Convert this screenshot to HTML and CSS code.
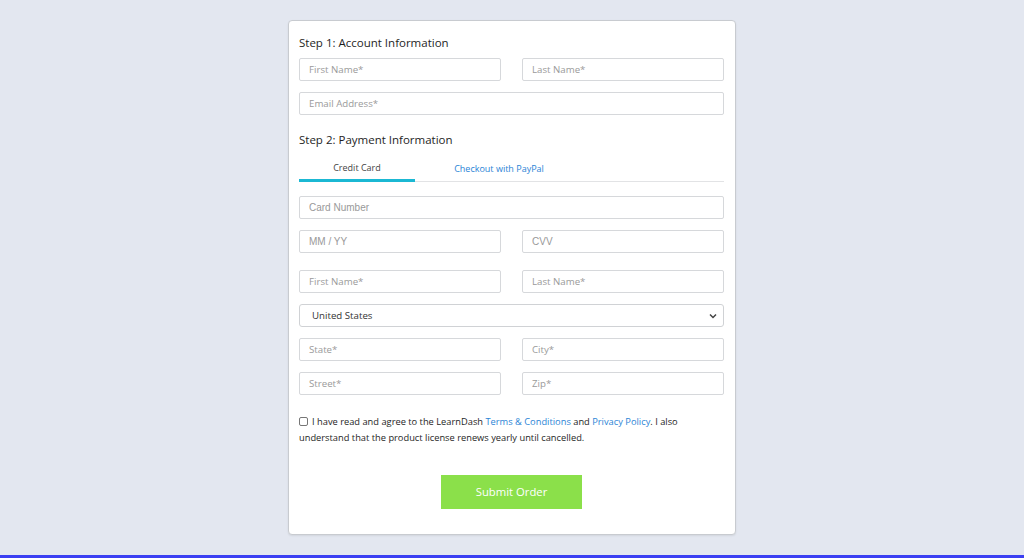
FILE: index.html
```html
<!DOCTYPE html>
<html>
<head>
<meta charset="utf-8">
<link rel="stylesheet" href="styles.css">
</head>
<body>
<div class="page">
  <form class="card">
    <h2 class="step step1">Step 1: Account Information</h2>
    <div class="row">
      <div class="field">First Name*</div>
      <div class="field">Last Name*</div>
    </div>
    <div class="row">
      <div class="field">Email Address*</div>
    </div>
    <h2 class="step step2">Step 2: Payment Information</h2>
    <div class="tabs">
      <div class="tab active">Credit Card</div>
      <div class="tab link">Checkout with PayPal</div>
    </div>
    <div class="row card-row">
      <div class="field stripe">Card Number</div>
    </div>
    <div class="row">
      <div class="field stripe">MM / YY</div>
      <div class="field stripe">CVV</div>
    </div>
    <div class="row billing">
      <div class="field">First Name*</div>
      <div class="field">Last Name*</div>
    </div>
    <div class="row">
      <div class="field select">
        <span>United States</span>
        <svg class="chev" width="8" height="6" viewBox="0 0 8 6"><path d="M1 1.5 L4 4.5 L7 1.5" fill="none" stroke="#444" stroke-width="1.5"/></svg>
      </div>
    </div>
    <div class="row">
      <div class="field">State*</div>
      <div class="field">City*</div>
    </div>
    <div class="row">
      <div class="field">Street*</div>
      <div class="field">Zip*</div>
    </div>
    <p class="agree"><span class="box"></span>I have read and agree to the LearnDash <a>Terms &amp; Conditions</a> and <a>Privacy Policy</a>. I also understand that the product license renews yearly until cancelled.</p>
    <div class="actions">
      <div class="submit">Submit Order</div>
    </div>
  </form>
</div>
<div class="bar"></div>
</body>
</html>
```

FILE: styles.css
```css
html, body {
  margin: 0;
  padding: 0;
}
body {
  background: #e3e7f0;
  font-family: "Open Sans", "Liberation Sans", sans-serif;
  color: #222;
  height: 558px;
  overflow: hidden;
  display: flex;
  flex-direction: column;
}
.page {
  flex: 1;
  display: flex;
  justify-content: center;
  align-items: flex-start;
  padding-top: 20px;
}
.card {
  box-sizing: border-box;
  width: 448px;
  height: 515px;
  background: #fff;
  border: 1px solid #c8cbd0;
  border-radius: 4px;
  box-shadow: 0 1px 2px rgba(0,0,0,0.08);
  padding: 0 11px 0 10px;
  display: flex;
  flex-direction: column;
}
.step {
  font-size: 11.5px;
  font-weight: 400;
  color: #1e1e1e;
  margin: 0;
  line-height: 16px;
}
.step1 { margin-top: 14px; margin-bottom: 7px; }
.step2 { margin-top: 6px; margin-bottom: 12px; }
.row {
  display: flex;
  gap: 21px;
  margin-bottom: 11px;
}
.row.billing { margin-top: 6px; }
.field {
  flex: 1;
  box-sizing: border-box;
  height: 23px;
  border: 1px solid #d6d8db;
  border-radius: 2px;
  font-size: 9.7px;
  color: #9a9a9a;
  line-height: 21px;
  padding-left: 9px;
}
.field.stripe {
  font-family: "Liberation Sans", Arial, sans-serif;
  font-size: 10px;
  color: #999;
}
.field.select {
  display: flex;
  justify-content: space-between;
  align-items: center;
  color: #333;
  padding-left: 12px;
  padding-right: 6px;
  border-radius: 3px;
  border-color: #d0d2d5;
}
.chev { display: block; }
.tabs {
  display: flex;
  border-bottom: 1px solid #e2e3e5;
  margin-bottom: 14px;
  height: 21px;
}
.tab {
  width: 116px;
  text-align: center;
  font-size: 9px;
  line-height: 15px;
  box-sizing: border-box;
}
.tab.active {
  color: #444;
  border-bottom: 3px solid #1bb8d3;
  margin-bottom: -1px;
}
.tab.link {
  color: #2b84d6;
  width: 168px;
  padding-top: 1px;
}
.agree {
  margin: 8px 0 0;
  font-size: 9.3px;
  line-height: 16px;
  color: #1e1e1e;
}
.agree a { color: #2b84d6; }
.box {
  display: inline-block;
  box-sizing: border-box;
  width: 9px;
  height: 9px;
  border: 1px solid #767676;
  border-radius: 2px;
  vertical-align: middle;
  margin-right: 4px;
  margin-top: -2px;
}
.actions {
  display: flex;
  justify-content: center;
  margin-top: 29px;
}
.submit {
  width: 141px;
  height: 34px;
  background: #8be04a;
  color: #fff;
  font-size: 11.3px;
  line-height: 34px;
  text-align: center;
}
.bar {
  height: 3px;
  background: #3b3ff2;
}
```
